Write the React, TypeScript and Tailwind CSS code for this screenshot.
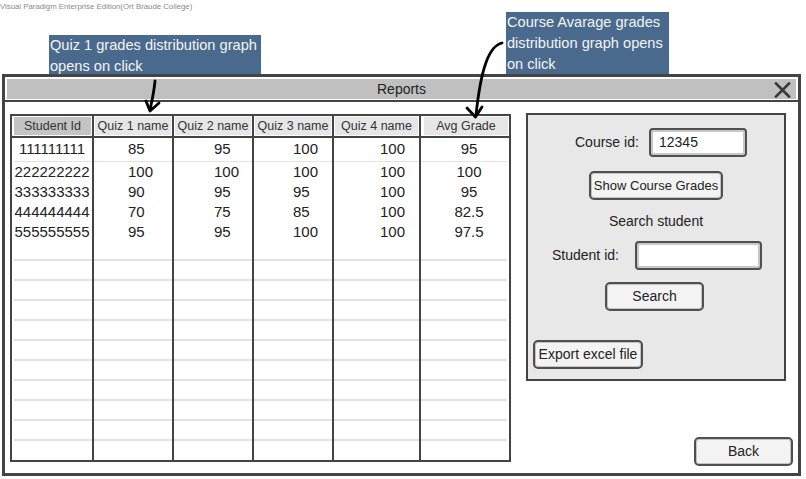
import React from 'react';

type Column = {
  title: string;
  width: string;
  head: string;
  cell: string;
  last?: boolean;
};

const columns: Column[] = [
  { title: 'Student Id', width: 'w-[82px]', head: 'bg-[#c4c4c4] ml-[2px] mr-[1px]', cell: 'justify-center' },
  { title: 'Quiz 1 name', width: 'w-[80px]', head: 'bg-[#e6e6e6] mx-[1px]', cell: 'pl-[34px]' },
  { title: 'Quiz 2 name', width: 'w-[80px]', head: 'bg-[#e6e6e6] mx-[1px]', cell: 'pl-[40px]' },
  { title: 'Quiz 3 name', width: 'w-[80px]', head: 'bg-[#e6e6e6] mx-[1px]', cell: 'pl-[39px]' },
  { title: 'Quiz 4 name', width: 'w-[87px]', head: 'bg-[#e6e6e6] mx-[1px]', cell: 'pl-[46px]' },
  { title: 'Avg Grade', width: 'w-[88px]', head: 'bg-[#e6e6e6] ml-[3px] mr-[1px]', cell: 'justify-center pl-[8px]', last: true },
];

const rows: string[][] = [
  ['111111111', '85', '95', '100', '100', '95'],
  ['222222222', '100', '100', '100', '100', '100'],
  ['333333333', '90', '95', '95', '100', '95'],
  ['444444444', '70', '75', '85', '100', '82.5'],
  ['555555555', '95', '95', '100', '100', '97.5'],
];

const TOTAL_ROWS = 16;

function GradeColumn({ col, index }: { col: Column; index: number }) {
  return (
    <div className={`${col.width} flex flex-col ${col.last ? '' : 'border-r-2 border-[#444]'}`}>
      {/* Header */}
      <div className="h-[22px] flex flex-col border-b-2 border-[#444] pt-[1px]">
        <div className={`${col.head} h-[18px] flex items-center justify-center text-[12.5px] text-[#333] whitespace-nowrap`}>
          {col.title}
        </div>
      </div>

      {/* Rows */}
      {Array.from({ length: TOTAL_ROWS }).map((_, r) => {
        const height = r === 0 ? 'h-[23px]' : r === TOTAL_ROWS - 1 ? 'h-[19px]' : 'h-[20px]';
        const value = rows[r]?.[index] ?? '';
        return (
          <div key={r} className={`${height} flex flex-col`}>
            <div className={`flex-1 flex items-center text-[15px] text-[#222] ${col.cell}`}>{value}</div>
            {r < TOTAL_ROWS - 1 && (
              <div className={`h-[2px] bg-[#e2e2e2] ${index === 0 ? 'ml-[2px]' : ''} ${col.last ? 'mr-[2px]' : ''}`} />
            )}
          </div>
        );
      })}
    </div>
  );
}

function SketchButton({ className, children }: { className: string; children: React.ReactNode }) {
  return (
    <div
      className={`h-[29px] flex items-center justify-center rounded-[5px] border-2 border-[#505050] bg-[#f3f3f3] shadow-[inset_0_0_0_1px_#c4c4c4] text-[#222] whitespace-nowrap ${className}`}
    >
      {children}
    </div>
  );
}

function SketchInput({ className, value }: { className: string; value?: string }) {
  return (
    <div
      className={`h-[29px] flex items-center rounded-[4px] border-2 border-[#505050] bg-white shadow-[inset_0_0_0_2px_#c8c8c8] pl-[8px] text-[14px] text-[#222] ${className}`}
    >
      {value}
    </div>
  );
}

export default function App() {
  return (
    <div className="relative w-[806px] h-[479px] bg-white overflow-hidden font-['Liberation_Sans',Arial,sans-serif]">
      {/* Watermark */}
      <div className="h-[14px] pt-[2px] text-[7.8px] leading-[10px] text-[#8a8a8a] whitespace-nowrap">
        Visual Paradigm Enterprise Edition(Ort Braude College)
      </div>

      {/* Window */}
      <div className="relative z-10 mt-[60px] ml-[2px] w-[799px] h-[402px] border-[3px] border-[#444] flex flex-col">
        {/* Title bar */}
        <div className="pt-[2px] px-[2px] pb-[1px]">
          <div className="h-[20px] bg-[#c0c0c0] grid grid-cols-[1fr_auto_1fr] items-center">
            <div />
            <span className="text-[14px] text-[#222]">Reports</span>
            <div className="flex justify-end pr-[5px]">
              <svg width="17" height="16" viewBox="0 0 17 16">
                <path d="M2 1.5 L15 14.5 M15 1.5 L2 14.5" stroke="#3a3a3a" strokeWidth="2.6" strokeLinecap="square" />
              </svg>
            </div>
          </div>
        </div>
        <div className="h-[2px] bg-[#444]" />

        {/* Content */}
        <div className="flex-1 flex pl-[5px] pt-[12px]">
          {/* Grades table */}
          <div className="w-[501px] h-[348px] border-2 border-[#444] flex">
            {columns.map((col, i) => (
              <GradeColumn key={col.title} col={col} index={i} />
            ))}
          </div>

          {/* Right side */}
          <div className="ml-[15px] flex-1 flex flex-col pr-[5px] pb-[7px] -mt-[1px]">
            <div className="w-[260px] h-[268px] border-2 border-[#444] bg-[#e8e8e8] flex flex-col pt-[13px]">
              <div className="flex items-center ml-[47px]">
                <span className="w-[74px] text-[14px] text-[#222]">Course id:</span>
                <SketchInput className="w-[98px]" value="12345" />
              </div>
              <SketchButton className="mt-[14px] ml-[61px] w-[134px] text-[13px]">Show Course Grades</SketchButton>
              <div className="mt-[12px] h-[18px] flex items-center justify-center text-[14px] text-[#222]">
                Search student
              </div>
              <div className="mt-[11px] flex items-center ml-[24px]">
                <span className="w-[83px] text-[14px] text-[#222]">Student id:</span>
                <SketchInput className="w-[127px]" />
              </div>
              <SketchButton className="mt-[12px] ml-[77px] w-[99px] text-[14px]">Search</SketchButton>
              <SketchButton className="mt-[29px] ml-[5px] w-[110px] text-[14px]">Export excel file</SketchButton>
            </div>
            <SketchButton className="mt-auto self-end w-[99px] text-[14px]">Back</SketchButton>
          </div>
        </div>
      </div>

      {/* Annotations */}
      <div className="absolute left-[49px] top-[35px] w-[212px] h-[42px] bg-[#496a8d] text-[#f4f4f4] text-[14.6px] leading-[21px] pl-[1px] whitespace-nowrap">
        Quiz 1 grades distribution graph
        <br />
        opens on click
      </div>
      <div className="absolute left-[506px] top-[12px] w-[163px] h-[63px] bg-[#496a8d] text-[#f4f4f4] text-[14.6px] leading-[21px] pl-[1px] whitespace-nowrap">
        Course Avarage grades
        <br />
        distribution graph opens
        <br />
        on click
      </div>

      <svg className="absolute inset-0 z-20 pointer-events-none" width="806" height="479" viewBox="0 0 806 479">
        <g fill="none" stroke="#000" strokeWidth="2.8" strokeLinecap="round" strokeLinejoin="round">
          <path d="M155 81 C154 92 152 101 150 110" />
          <path d="M146 101 L150 111 L159 103" />
          <path d="M502 43 C489 46 481 68 476 115" />
          <path d="M467 108 L475.5 117 L482 107" />
        </g>
      </svg>
    </div>
  );
}
